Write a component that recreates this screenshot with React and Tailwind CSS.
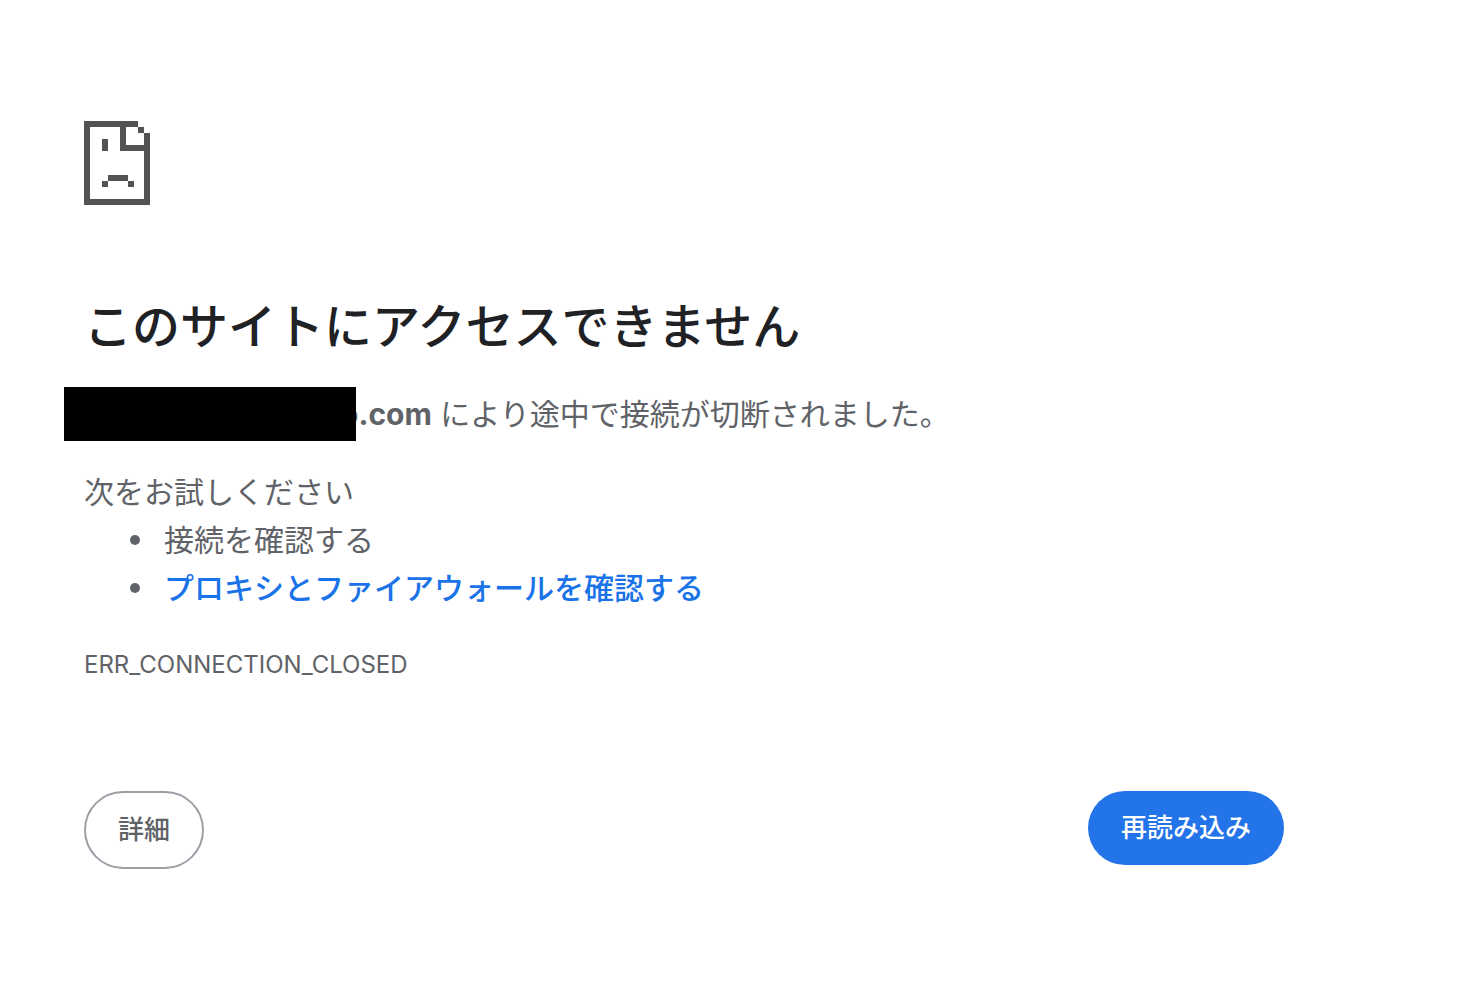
// Each entry is [x, y, width, height] on an 11 by 14 pixel grid.
const ICON_RECTS = [
  [0, 0, 9, 1], [0, 0, 1, 14], [0, 13, 11, 1], [10, 2, 1, 12],
  [6, 0, 1, 5], [6, 4, 5, 1], [9, 1, 1, 1],
  [3, 3, 1, 2], [4, 9, 3.34, 1], [3, 10, 1, 1], [7.34, 10, 1, 1],
];

function SadPageIcon() {
  return (
    <svg viewBox="0 0 11 14" className="h-[84px] w-[66px]" fill="#535353" shapeRendering="crispEdges" aria-hidden="true">
      {ICON_RECTS.map(([x, y, w, h]) => (
        <rect key={`${x}-${y}-${w}`} x={x} y={y} width={w} height={h} />
      ))}
    </svg>
  );
}

function Suggestion({ children }) {
  return (
    <li className="flex items-center gap-6 pl-[46px]">
      <span className="size-[10px] rounded-full bg-[#5f6368]" />
      {children}
    </li>
  );
}

export default function App() {
  return (
    <div className="min-h-screen bg-white pt-[121px] pr-[181px] pb-16 pl-[84px] font-['Inter','Noto_Sans_CJK_JP',sans-serif] text-[30px] leading-[48px] text-[#5f6368]">
      <main>
        <SadPageIcon />
        <h1 className="mt-[92px] text-[48px] leading-[60px] font-medium text-[#202124]">このサイトにアクセスできません</h1>
        <p className="-ml-5 mt-[30px] flex items-center">
          <span className="z-10 h-[54px] w-[292px] bg-black" />
          <span className="-ml-4"><strong className="font-bold">o.com</strong> により途中で接続が切断されました。</span>
        </p>
        <p className="mt-[27px]">次をお試しください</p>
        <ul>
          <Suggestion>接続を確認する</Suggestion>
          <Suggestion><a href="#proxy" className="font-medium text-[#1a73e8]">プロキシとファイアウォールを確認する</a></Suggestion>
        </ul>
        <p className="mt-[29px] text-[24px]">ERR_CONNECTION_CLOSED</p>
        <div className="mt-[102px] flex items-start justify-between text-[26px] font-medium">
          <button type="button" className="h-[78px] w-[120px] rounded-full border-2 border-[#9aa0a6]">詳細</button>
          <button type="button" className="h-[74px] w-[196px] rounded-full bg-[#2374e9] text-white">再読み込み</button>
        </div>
      </main>
    </div>
  );
}
